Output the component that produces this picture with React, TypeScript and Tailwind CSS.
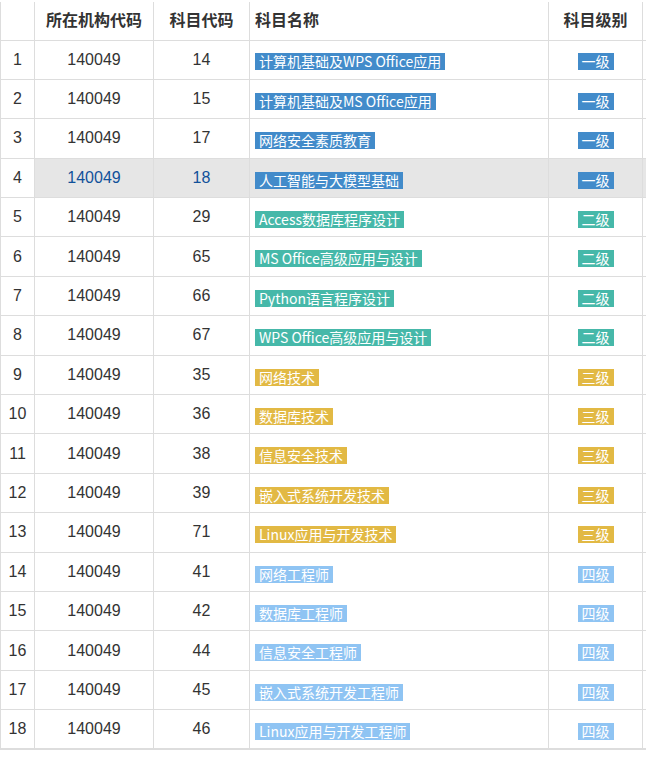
const levels = {
  1: { label: "一级", color: "bg-[#428bca]" },
  2: { label: "二级", color: "bg-[#46b8a9]" },
  3: { label: "三级", color: "bg-[#e2b944]" },
  4: { label: "四级", color: "bg-[#8fc4f3]" },
} as const

const subjects: { code: string; name: string; level: 1 | 2 | 3 | 4 }[] = [
  { code: "14", name: "计算机基础及WPS Office应用", level: 1 },
  { code: "15", name: "计算机基础及MS Office应用", level: 1 },
  { code: "17", name: "网络安全素质教育", level: 1 },
  { code: "18", name: "人工智能与大模型基础", level: 1 },
  { code: "29", name: "Access数据库程序设计", level: 2 },
  { code: "65", name: "MS Office高级应用与设计", level: 2 },
  { code: "66", name: "Python语言程序设计", level: 2 },
  { code: "67", name: "WPS Office高级应用与设计", level: 2 },
  { code: "35", name: "网络技术", level: 3 },
  { code: "36", name: "数据库技术", level: 3 },
  { code: "38", name: "信息安全技术", level: 3 },
  { code: "39", name: "嵌入式系统开发技术", level: 3 },
  { code: "71", name: "Linux应用与开发技术", level: 3 },
  { code: "41", name: "网络工程师", level: 4 },
  { code: "42", name: "数据库工程师", level: 4 },
  { code: "44", name: "信息安全工程师", level: 4 },
  { code: "45", name: "嵌入式系统开发工程师", level: 4 },
  { code: "46", name: "Linux应用与开发工程师", level: 4 },
]

const font = "font-['Liberation_Sans','Noto_Sans_CJK_SC',sans-serif]"

function Badge({ text, color }: { text: string; color: string }) {
  return (
    <span
      className={`inline-block ${color} px-[4px] font-['Noto_Sans_CJK_SC',sans-serif] text-[14px] leading-[17px] text-white align-middle`}
    >
      {text}
    </span>
  )
}

export default function App() {
  return (
    <div className={`w-[646px] overflow-hidden bg-white pt-[2px] ${font} text-[#333]`}>
      <table className="w-[660px] table-fixed border-collapse border-b-2 border-b-[#ddd] text-[16px]">
        <colgroup>
          <col className="w-[34px]" />
          <col className="w-[119px]" />
          <col className="w-[96px]" />
          <col className="w-[299px]" />
          <col className="w-[94px]" />
          <col />
        </colgroup>
        <thead>
          <tr className="h-[38px]">
            <th className="border-x border-[#ddd] border-b" />
            <th className="border-x border-b border-[#ddd] text-center font-bold">所在机构代码</th>
            <th className="border-x border-b border-[#ddd] text-center font-bold">科目代码</th>
            <th className="border-x border-b border-[#ddd] pl-[5px] text-left font-bold">科目名称</th>
            <th className="border-x border-b border-[#ddd] text-center font-bold">科目级别</th>
            <th className="border-x border-b border-[#ddd]" />
          </tr>
        </thead>
        <tbody>
          {subjects.map((s, i) => {
            const hl = i === 3
            const cell = `border border-[#ddd] ${hl ? "bg-[#e6e6e6] text-[#11519a]" : ""}`
            return (
              <tr key={s.code} className="h-[39.4px]">
                <td className="border border-[#ddd] text-center">{i + 1}</td>
                <td className={`${cell} text-center`}>140049</td>
                <td className={`${cell} text-center`}>{s.code}</td>
                <td className={`${cell} pl-[5px] pt-[3px]`}>
                  <Badge text={s.name} color={levels[s.level].color} />
                </td>
                <td className={`${cell} pt-[3px] text-center`}>
                  <Badge text={levels[s.level].label} color={levels[s.level].color} />
                </td>
                <td className={cell} />
              </tr>
            )
          })}
        </tbody>
      </table>
    </div>
  )
}
